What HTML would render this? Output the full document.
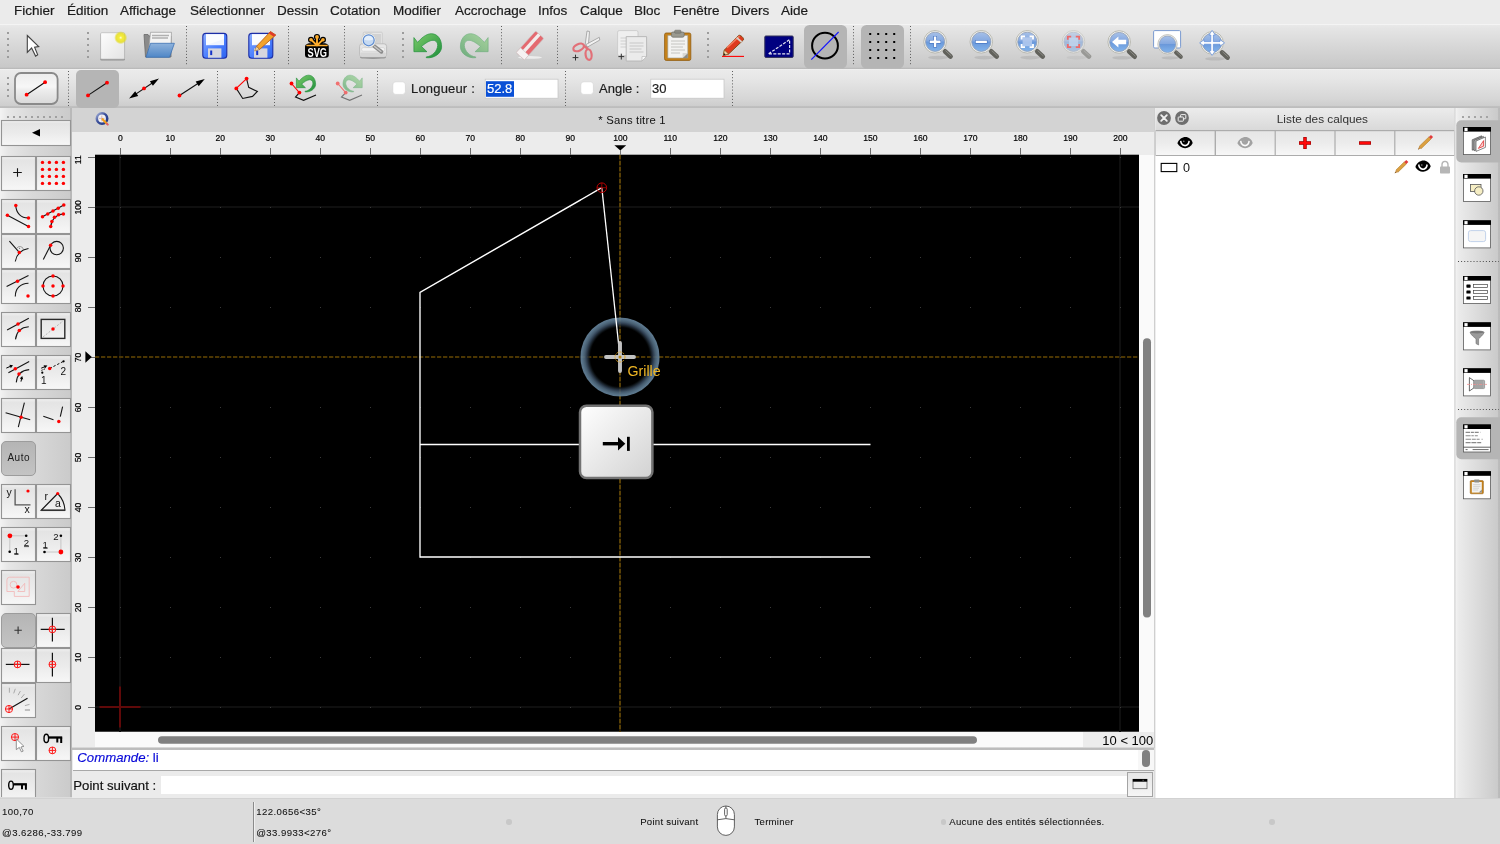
<!DOCTYPE html>
<html lang="fr">
<head>
<meta charset="utf-8">
<title>QCAD</title>
<style>
*{box-sizing:border-box;margin:0;padding:0}
html,body{width:1500px;height:844px;overflow:hidden;background:#dcdcdc;font-family:"Liberation Sans",sans-serif;color:#1a1a1a}
.abs{position:absolute}
#root{position:absolute;left:0;top:0;width:1500px;height:844px;will-change:transform}
#menubar{position:absolute;left:0;top:0;width:1500px;height:24px;background:#ebebeb}
#menubar span{position:absolute;top:3px;-webkit-text-stroke:.22px #1c1c1c;font-size:13.5px;line-height:16px;color:#1c1c1c;white-space:nowrap}
#tb1{position:absolute;left:0;top:24px;width:1500px;height:45px;background:linear-gradient(#e9e9e9 0px,#e5e5e5 3px,#d5d5d5 24px,#c8c8c8 42px,#bcbcbc 43.4px,#adadad 44.4px,#b4b4b4 45px);border-top:1px solid #f4f4f4}
#tb2{position:absolute;left:0;top:69px;width:1500px;height:39px;background:linear-gradient(#f3f3f3 0px,#ebebeb 1.2px,#e6e6e6 10px,#d6d6d6 30px,#cecece 36.6px,#bebebe 37.6px,#bcbcbc 39px)}
#lefttb{position:absolute;left:0;top:108px;width:72px;height:689px;background:linear-gradient(90deg,#f3f3f3 0px,#e7e7e7 8px,#d9d9d9 32px,#cbcbcb 69.6px,#b9b9b9 70.2px,#b9b9b9 72px)}
#cmdarea{position:absolute;left:72px;top:748px;width:1082px;height:50px;background:#ebebeb}
#status{position:absolute;left:0;top:798px;width:1500px;height:46px;background:#dcdcdc}
.t13{-webkit-text-stroke:.18px currentColor;font-size:13px;line-height:16px;white-space:nowrap;color:#1c1c1c}
.st{-webkit-text-stroke:.07px currentColor;font-size:9.6px;line-height:12px;letter-spacing:.42px;color:#111;white-space:nowrap}
.dot{width:5.4px;height:5.4px;border-radius:50%;background:#c8c8c8}
</style>
</head>
<body>
<div id="root">
<div id="menubar">
<span style="left:14px">Fichier</span><span style="left:67px">Édition</span><span style="left:120px">Affichage</span><span style="left:190px">Sélectionner</span><span style="left:277px">Dessin</span><span style="left:330px">Cotation</span><span style="left:393px">Modifier</span><span style="left:455px">Accrochage</span><span style="left:538px">Infos</span><span style="left:580px">Calque</span><span style="left:634px">Bloc</span><span style="left:673px">Fenêtre</span><span style="left:731px">Divers</span><span style="left:781px">Aide</span>
</div>
<div id="tb1"></div>
<svg class="abs" style="left:0;top:24px" width="1500" height="45" viewBox="0 24 1500 45">
<defs>
<radialGradient id="glow"><stop offset="0" stop-color="#fffde0"/><stop offset="0.25" stop-color="#f6ee3c"/><stop offset="0.7" stop-color="#e6de20" stop-opacity=".85"/><stop offset="1" stop-color="#e0d820" stop-opacity="0"/></radialGradient>
<linearGradient id="paper" x1="0" y1="0" x2="1" y2="1"><stop offset="0" stop-color="#fdfdfd"/><stop offset="1" stop-color="#e4e4e4"/></linearGradient>
<linearGradient id="folder" x1="0" y1="0" x2="0" y2="1"><stop offset="0" stop-color="#8fb3dc"/><stop offset="1" stop-color="#4f86c6"/></linearGradient>
<linearGradient id="disk" x1="0" y1="0" x2="1" y2="1"><stop offset="0" stop-color="#8fb0ff"/><stop offset="0.5" stop-color="#4f82ff"/><stop offset="1" stop-color="#2d63f0"/></linearGradient>
<linearGradient id="lens" x1="0" y1="0" x2="0" y2="1"><stop offset="0" stop-color="#a6c0e8"/><stop offset="0.47" stop-color="#84a8e0"/><stop offset="0.5" stop-color="#6a98da"/><stop offset="1" stop-color="#82b4ec"/></linearGradient>
<linearGradient id="green" x1="0" y1="0" x2="1" y2="1"><stop offset="0" stop-color="#7ccb6a"/><stop offset="1" stop-color="#1f8f3c"/></linearGradient>
<g id="mag">
<ellipse cx="3" cy="15.8" rx="10" ry="1.8" fill="#000" opacity=".09"/>
<path d="M10 9.6 L15.4 14.6" stroke="#62625c" stroke-width="4.8" stroke-linecap="round"/>
<path d="M10.6 9 L16 14" stroke="#8a8a84" stroke-width="1" stroke-linecap="round"/>
<circle cx="0" cy="0" r="11.3" fill="#f1f1ed" stroke="#b4b4ac" stroke-width=".9"/>
<circle cx="0" cy="0" r="9.6" fill="url(#lens)" stroke="#8e9cb4" stroke-width=".8"/>
</g>
</defs>
<!-- grips -->
<g fill="#9c9c9c">
<g id="grip5"><rect x="7" y="32" width="2" height="2"/><rect x="7" y="38" width="2" height="2"/><rect x="7" y="44" width="2" height="2"/><rect x="7" y="50" width="2" height="2"/><rect x="7" y="56" width="2" height="2"/></g>
<use href="#grip5" x="80"/><use href="#grip5" x="395"/><use href="#grip5" x="700"/>
</g>
<!-- dotted separators -->
<g stroke="#5c5c5c" stroke-width="1" stroke-dasharray="1 2.1">
<path d="M186.5 26V66M288.5 26V66M344.5 26V66M501.5 26V66M557.5 26V66M853.5 26V66M910.5 26V66"/>
</g>
<!-- cursor -->
<path d="M27.3 35.5 L38.7 46.6 L34.6 47.1 L37.7 54.7 L35.6 56.1 L31.6 48 L27.3 52.3 Z" fill="#fff" stroke="#444" stroke-width="1.1" stroke-linejoin="miter"/>
<!-- new -->
<rect x="100.2" y="33.4" width="24.8" height="27.2" rx="1.6" fill="#7e7e7e" opacity=".75"/>
<rect x="100.6" y="32.7" width="24" height="26.4" rx="1.2" fill="url(#paper)" stroke="#b8b8b8" stroke-width=".7"/>
<circle cx="120.7" cy="37.7" r="6.6" fill="url(#glow)"/>
<!-- open -->
<path d="M144 34.5 L148 34.5 L149 36 L171 36 L171 57 L145.5 57 Z" fill="#8a8a8a" stroke="#6a6a6a" stroke-width=".8"/>
<path d="M150.5 32.3 L171.5 32.3 L171 45 L148.5 52 Z" fill="#f4f4f4" stroke="#9a9a9a" stroke-width=".7"/>
<path d="M152 35.5H169M152 38H168" stroke="#b0b0b0" stroke-width="1.6"/>
<path d="M150.5 43.3 L174.4 43.3 L169.5 57.3 L146 57.3 Z" fill="url(#folder)" stroke="#3d72b4" stroke-width=".8"/>
<!-- save -->
<g id="floppy">
<rect x="202.8" y="33.4" width="24" height="24.8" rx="3" fill="url(#disk)" stroke="#1c2ea6" stroke-width="1.1"/>
<rect x="206" y="34.2" width="18" height="11" fill="#eef3ff"/>
<path d="M206 34.2H224V39L206 45.2Z" fill="#fff" opacity=".7"/>
<rect x="208" y="48.4" width="13.4" height="9.3" fill="#d6d6de"/>
<rect x="210.2" y="50.5" width="2" height="4.6" fill="#1734c8"/>
</g>
<!-- save as -->
<use href="#floppy" x="46"/>
<path d="M270.5 31.5 L275.8 35 L259.5 49.5 L256.5 46.3 Z" fill="#f2a32c" stroke="#b4570c" stroke-width=".8"/>
<path d="M270.5 31.5 L275.8 35 L273.8 36.8 L268.6 33.2 Z" fill="#e03a2a"/>
<path d="M256.5 46.3 L259.5 49.5 L254.6 51 Z" fill="#f0d4a6" stroke="#8a5a20" stroke-width=".5"/>
<!-- svg -->
<rect x="305" y="44" width="23.8" height="13.8" rx="3" fill="#000"/>
<g fill="none" stroke="#000" stroke-width="4.4" stroke-linecap="round" stroke-linejoin="round">
<path d="M317 45V37M317 45.4L311.2 39.8M317 45.4L322.8 39.8M309 45.4H325"/>
</g>
<circle cx="317" cy="37" r="3.1" fill="#000"/><circle cx="311" cy="39.7" r="3" fill="#000"/><circle cx="323" cy="39.7" r="3" fill="#000"/>
<g fill="none" stroke="#fbab2c" stroke-width="1.9" stroke-linecap="round">
<path d="M317 45V37M317 45.4L311.2 39.8M317 45.4L322.8 39.8"/>
</g>
<circle cx="317" cy="37" r="1.9" fill="#fbab2c"/><circle cx="311" cy="39.7" r="1.8" fill="#fbab2c"/><circle cx="323" cy="39.7" r="1.8" fill="#fbab2c"/>
<path d="M313.6 45.4 L317 42.4 L320.4 45.4Z" fill="#fbab2c"/>
<path d="M307 45.5 H327" stroke="#fbab2c" stroke-width="1.5" stroke-linecap="round"/>
<text transform="translate(307.5 56.8) scale(.7 1)" font-family="Liberation Sans" font-weight="bold" font-size="13.2" fill="#fff">SVG</text>
<!-- print preview -->
<rect x="363.3" y="32.2" width="19" height="14" rx="1" fill="#e6e6e6" stroke="#c4c4c4" stroke-width=".7"/>
<rect x="372" y="34" width="9" height="9.4" fill="#d2d2d2"/>
<ellipse cx="373" cy="57.4" rx="13" ry="1.7" fill="#000" opacity=".28"/>
<rect x="359.6" y="43.8" width="27" height="13.2" rx="2.6" fill="#e6e6e6" stroke="#b4b4b4" stroke-width=".8"/>
<rect x="361.6" y="47.6" width="23" height="3.6" rx="1.6" fill="#f4f4f4" stroke="#c4c4c4" stroke-width=".5"/>
<rect x="360.4" y="52.4" width="25.4" height="4" rx="1.2" fill="#d6d6d6"/>
<path d="M374 46 L381.4 51.8" stroke="#8c8c8c" stroke-width="3.8" stroke-linecap="round"/>
<path d="M374.6 46.4 L381 51.4" stroke="#c8c8c8" stroke-width="1.3" stroke-linecap="round"/>
<circle cx="368.7" cy="40.3" r="7.2" fill="#f6f6f4" stroke="#c4c4c0" stroke-width=".7"/>
<circle cx="368.7" cy="40.3" r="5.5" fill="#c6daf2" stroke="#5b8ad0" stroke-width="1.2"/>
<path d="M364 39.5 A4.8 4.8 0 0 1 373.4 39.5 Q368.7 41.5 364 39.5Z" fill="#eef5ff" opacity=".75"/>
<!-- undo -->
<path d="M413.9 37.6 L417.6 42.4 C421 38.5 426 33.7 431.4 33.7 C438 33.7 441.8 40 441.6 47.2 C441.3 53.5 434 58.6 426.3 57.7 L426.3 56.9 C432 56.5 437.5 51 437.7 45.4 C437.8 42 435.5 40.3 433 40.3 C429.5 40.3 425 43.5 421.5 46.5 L426.9 51.7 L413.9 51.7 Z" fill="url(#green)" stroke="#23903c" stroke-width=".7"/>
<!-- redo -->
<g opacity=".55"><path d="M413.9 37.6 L417.6 42.4 C421 38.5 426 33.7 431.4 33.7 C438 33.7 441.8 40 441.6 47.2 C441.3 53.5 434 58.6 426.3 57.7 L426.3 56.9 C432 56.5 437.5 51 437.7 45.4 C437.8 42 435.5 40.3 433 40.3 C429.5 40.3 425 43.5 421.5 46.5 L426.9 51.7 L413.9 51.7 Z" fill="url(#green)" stroke="#23903c" stroke-width=".7" transform="translate(902 0) scale(-1 1)"/></g>
<!-- eraser -->
<ellipse cx="530" cy="57.4" rx="12" ry="1.4" fill="#fff" opacity=".6"/>
<g transform="rotate(-48 530 45.5)">
<rect x="515.5" y="40" width="29" height="11" rx="1.2" fill="#e46a70" stroke="#c8c0c0" stroke-width=".6"/>
<rect x="515.5" y="43.2" width="29" height="3.4" fill="#f2ecec"/>
<rect x="515.5" y="40" width="6.4" height="11" fill="#f6f2f2" stroke="#c8c0c0" stroke-width=".5"/>
</g>
<!-- scissors -->
<path d="M587 31 L589.5 31.5 L588.2 47 L585 46 Z" fill="#f2f2f2" stroke="#9a9a9a" stroke-width=".8"/>
<path d="M599.3 37.3 L599.8 40 L587.5 47 L586 44.5 Z" fill="#f2f2f2" stroke="#9a9a9a" stroke-width=".8"/>
<ellipse cx="578.6" cy="47.4" rx="5.6" ry="3.3" transform="rotate(-24 578.6 47.4)" fill="none" stroke="#e27078" stroke-width="2.2"/>
<ellipse cx="588.6" cy="54.6" rx="3" ry="5.4" transform="rotate(-8 588.6 54.6)" fill="none" stroke="#e27078" stroke-width="2.2"/>
<path d="M583.5 45.5 L588 49" stroke="#e27078" stroke-width="2.4"/>
<path d="M572.6 57.6H578.4M575.5 54.7V60.5" stroke="#333" stroke-width="1"/>
<!-- copy -->
<rect x="617.6" y="30.6" width="20.4" height="25" rx="1.6" fill="#efefef" stroke="#c6c6c6" stroke-width=".8"/>
<path d="M620.5 38H629M620.5 41H629M620.5 44H629M620.5 47H629" stroke="#cfcfcf" stroke-width="1"/>
<path d="M626.2 36.6 H646.6 V56.5 L642 61 H626.2 Z" fill="#ebebeb" stroke="#b4b4b4" stroke-width=".9"/>
<path d="M646.6 56.5 L642 61 V56.5 Z" fill="#fafafa" stroke="#b0b0b0" stroke-width=".6"/>
<path d="M629.5 43H643.5M629.5 46H643.5M629.5 49H641.5M629.5 52H643.5" stroke="#c8c8c8" stroke-width="1.1"/>
<path d="M618.4 56.6H624.2M621.3 53.7V59.5" stroke="#333" stroke-width="1"/>
<!-- paste -->
<rect x="664.6" y="33" width="26.2" height="27.4" rx="1.6" fill="#c6821a" stroke="#8f5a0e" stroke-width=".8"/>
<path d="M667.8 35.4 H687.8 V58 H667.8 Z" fill="#f3f3f1" stroke="#9a9a90" stroke-width=".6"/>
<path d="M687.8 53 V58 H682.6 Z" fill="#8c8c86"/>
<path d="M682.6 53 H687.8 L682.6 58 Z" fill="#d8d8d4"/>
<path d="M671 41H685M671 44H685M671 47H683M671 50H685M671 53H680" stroke="#c4c4c0" stroke-width="1"/>
<rect x="671.4" y="32" width="12.8" height="5.2" rx="1.6" fill="#9a9a90" stroke="#6e6e66" stroke-width=".7"/>
<rect x="674.6" y="30.2" width="6.4" height="3" rx="1" fill="#8a8a82" stroke="#6e6e66" stroke-width=".6"/>
<!-- pencil -->
<path d="M722 56.4H744" stroke="#ff0000" stroke-width="1.1"/>
<path d="M738.6 35.4 C740 34.4 744.5 38 743.4 40 L728.6 54 L723.4 55.4 L724.4 50 Z" fill="#de3a1e" stroke="#7a4a12" stroke-width=".9"/>
<path d="M727 47.6 L739.5 36.2" stroke="#f47a5c" stroke-width="1.6"/>
<path d="M736.6 37.6 L741.6 42" stroke="#d8d0c8" stroke-width="1.8"/>
<path d="M724.4 50 L728.6 54 L723.4 55.4 Z" fill="#f0d4a6" stroke="#7a4a12" stroke-width=".6"/>
<path d="M723.4 55.4 L724 53 L725.6 54.8 Z" fill="#222"/>
<!-- navy box -->
<rect x="764.8" y="36" width="28.4" height="21.4" rx="1" fill="#000080" stroke="#33335a" stroke-width="1"/>
<path d="M768.6 53.8 L789.6 39.6 V53.8 Z" fill="none" stroke="#e6e6f2" stroke-width="1.2" stroke-dasharray="3 1.4"/>
<!-- selected: circle -->
<rect x="804" y="25" width="43" height="43.6" rx="5.5" fill="#b5b5b5"/>
<circle cx="825" cy="45.7" r="12.9" fill="none" stroke="#000" stroke-width="2"/>
<path d="M811.3 59.7 L838.6 32" stroke="#1414ff" stroke-width="1.1"/>
<!-- selected: grid -->
<rect x="861" y="25" width="43" height="43.6" rx="5.5" fill="#b5b5b5"/>
<g fill="#000" id="gdots">
<rect x="869.2" y="33" width="2" height="2"/><rect x="877.2" y="33" width="2" height="2"/><rect x="885.2" y="33" width="2" height="2"/><rect x="893.2" y="33" width="2" height="2"/>
<rect x="869.2" y="41" width="2" height="2"/><rect x="877.2" y="41" width="2" height="2"/><rect x="885.2" y="41" width="2" height="2"/><rect x="893.2" y="41" width="2" height="2"/>
<rect x="869.2" y="49" width="2" height="2"/><rect x="877.2" y="49" width="2" height="2"/><rect x="885.2" y="49" width="2" height="2"/><rect x="893.2" y="49" width="2" height="2"/>
<rect x="869.2" y="57" width="2" height="2"/><rect x="877.2" y="57" width="2" height="2"/><rect x="885.2" y="57" width="2" height="2"/><rect x="893.2" y="57" width="2" height="2"/>
</g>
<!-- zoom in -->
<use href="#mag" x="935.1" y="41.8"/>
<path d="M929.2 41.8H941M935.1 36V47.6" stroke="#3f6fbe" stroke-width="3.6"/><path d="M929.7 41.8H940.5M935.1 36.5V47.1" stroke="#fff" stroke-width="2.4"/>
<!-- zoom out -->
<use href="#mag" x="981.3" y="41.8"/>
<path d="M975.2 41.8H987.4" stroke="#3f6fbe" stroke-width="3.6"/><path d="M975.7 41.8H986.9" stroke="#fff" stroke-width="2.4"/>
<!-- zoom fit -->
<use href="#mag" x="1027.3" y="41.8"/>
<rect x="1022.6" y="37.4" width="9.4" height="8.8" fill="#b8cdf0" opacity=".8"/>
<path d="M1021.6 39.6V36.4H1025M1029.6 36.4H1033V39.6M1033 44V47.2H1029.6M1025 47.2H1021.6V44" fill="none" stroke="#fff" stroke-width="1.8"/>
<!-- zoom sel (faded) -->
<g opacity=".5"><use href="#mag" x="1073.5" y="41.8"/></g>
<rect x="1069" y="37.6" width="9" height="8.4" fill="#c2d4ee" opacity=".8"/>
<path d="M1067.8 39.8V36.6H1071.2M1075.8 36.6H1079.2V39.8M1079.2 44V47.2H1075.8M1071.2 47.2H1067.8V44" fill="none" stroke="#ee6a6a" stroke-width="1.8"/>
<!-- zoom prev -->
<use href="#mag" x="1119.2" y="42"/>
<path d="M1112 42 L1118.4 36.6 V39.8 H1126.2 V44.2 H1118.4 V47.4 Z" fill="#fff"/>
<!-- zoom window -->
<rect x="1153.6" y="30.6" width="27" height="17.4" rx="1.2" fill="#fff" stroke="#7a9ad0" stroke-width="1"/>
<g transform="translate(1167.5 44.3) scale(.86)"><use href="#mag"/></g>
<!-- pan -->
<use href="#mag" x="1212.1" y="42.9"/>
<path d="M1212.1 30.4 L1215.3 35 H1213.4 V41.6 H1220 V39.7 L1224.6 42.9 L1220 46.1 V44.2 H1213.4 V50.8 H1215.3 L1212.1 55.4 L1208.9 50.8 H1210.8 V44.2 H1204.2 V46.1 L1199.6 42.9 L1204.2 39.7 V41.6 H1210.8 V35 H1208.9 Z" fill="#fff" stroke="#5a8ad8" stroke-width=".7"/>
</svg>
<div id="tb2"></div>
<svg class="abs" style="left:0;top:69px" width="800" height="39" viewBox="0 69 800 39">
<defs>
<linearGradient id="btng" x1="0" y1="0" x2="0" y2="1"><stop offset="0" stop-color="#ececec"/><stop offset=".45" stop-color="#f7f7f7"/><stop offset=".55" stop-color="#ededed"/><stop offset="1" stop-color="#d9d9d9"/></linearGradient>
</defs>
<g fill="#9c9c9c"><rect x="7" y="77" width="2" height="2"/><rect x="7" y="83" width="2" height="2"/><rect x="7" y="89" width="2" height="2"/><rect x="7" y="95" width="2" height="2"/></g>
<g stroke="#5c5c5c" stroke-width="1" stroke-dasharray="1 2.1"><path d="M68.5 71V106M217.5 71V106M274.5 71V106M377.5 71V106M565.5 71V106M732.5 71V106"/></g>
<rect x="15" y="73" width="42.6" height="31" rx="6" fill="url(#btng)" stroke="#8a8a8a" stroke-width="1.8"/>
<path d="M26.6 94.7L45.1 82.2" stroke="#111" stroke-width="1.1"/>
<circle cx="26.6" cy="94.7" r="1.9" fill="#ff0000"/><circle cx="45.1" cy="82.2" r="1.9" fill="#ff0000"/>
<rect x="76" y="70" width="43" height="38" rx="5" fill="#b5b5b5"/>
<path d="M88 95.4L107 82.7" stroke="#111" stroke-width="1.1"/>
<circle cx="88" cy="95.4" r="1.9" fill="#ff0000"/><circle cx="107" cy="82.7" r="1.9" fill="#ff0000"/>
<!-- double arrow -->
<path d="M132 96.6L156 80.5" stroke="#111" stroke-width="1.1"/>
<path d="M129.1 98.5 L135.2 91.3 L138.2 95.9 Z M159 78.6 L152.9 85.8 L149.9 81.2 Z" fill="#000"/>
<circle cx="144" cy="88.4" r="1.9" fill="#ff0000"/>
<!-- single arrow -->
<path d="M179.5 95.5L201 81.5" stroke="#111" stroke-width="1.1"/>
<path d="M204.8 79 L198.7 86.2 L195.7 81.6 Z" fill="#000"/>
<circle cx="179.5" cy="95.5" r="1.9" fill="#ff0000"/>
<!-- polygon -->
<path d="M246.6 78.6 L248.7 87.3 L257.4 91.5 L252.5 96.4 L242.7 98.5 L236.3 88.4" fill="none" stroke="#111" stroke-width="1.1"/>
<path d="M246.6 78.6 L236.3 88.4" stroke="#ff0000" stroke-width="1.1"/>
<circle cx="246.6" cy="78.6" r="1.9" fill="#ff0000"/><circle cx="236.3" cy="88.4" r="1.9" fill="#ff0000"/>
<!-- undo line -->
<g id="ul">
<path d="M299.4 92.6 L295.5 97.1 L303.6 100.3 L316 95.1" fill="none" stroke="#111" stroke-width="1.1"/>
<path d="M291.5 83.5 L299.4 92.6" stroke="#ff0000" stroke-width="1.1"/>
<circle cx="291.5" cy="83.5" r="1.9" fill="#ff0000"/><circle cx="299.4" cy="92.6" r="1.9" fill="#ff0000"/>
</g>
<g transform="translate(296.4 75.2) scale(.693) translate(-413.9 -33.7)"><path d="M413.9 37.6 L417.6 42.4 C421 38.5 426 33.7 431.4 33.7 C438 33.7 441.8 40 441.6 47.2 C441.3 53.5 434 58.6 426.3 57.7 L426.3 56.9 C432 56.5 437.5 51 437.7 45.4 C437.8 42 435.5 40.3 433 40.3 C429.5 40.3 425 43.5 421.5 46.5 L426.9 51.7 L413.9 51.7 Z" fill="url(#green)" stroke="#23903c" stroke-width=".9"/></g>
<!-- redo line -->
<g opacity=".5">
<path d="M345.7 92.6 L341.5 97.1 L349.7 100.3 L362 95.1" fill="none" stroke="#111" stroke-width="1.1"/>
<path d="M337.7 83.5 L345.7 92.6" stroke="#ff0000" stroke-width="1.1"/>
<circle cx="337.7" cy="83.5" r="1.9" fill="#ff0000"/><circle cx="345.7" cy="92.6" r="1.9" fill="#ff0000"/>
<g transform="translate(362.2 75.2) scale(-.693 .693) translate(-413.9 -33.7)"><path d="M413.9 37.6 L417.6 42.4 C421 38.5 426 33.7 431.4 33.7 C438 33.7 441.8 40 441.6 47.2 C441.3 53.5 434 58.6 426.3 57.7 L426.3 56.9 C432 56.5 437.5 51 437.7 45.4 C437.8 42 435.5 40.3 433 40.3 C429.5 40.3 425 43.5 421.5 46.5 L426.9 51.7 L413.9 51.7 Z" fill="url(#green)" stroke="#23903c" stroke-width=".9"/></g>
</g>
<!-- checkboxes -->
<rect x="392.8" y="81.8" width="12.6" height="12.6" rx="3" fill="#fff" stroke="#d0d0d0" stroke-width=".6"/>
<rect x="580.8" y="81.8" width="12.6" height="12.6" rx="3" fill="#fff" stroke="#d0d0d0" stroke-width=".6"/>
<!-- inputs -->
<rect x="485.2" y="79.2" width="72.8" height="19" fill="#fff" stroke="#c4c4c4" stroke-width=".7"/>
<rect x="486" y="81.2" width="28" height="15.6" fill="#0a50d6"/>
<rect x="650.8" y="79.2" width="73.2" height="19" fill="#fff" stroke="#c4c4c4" stroke-width=".7"/>
</svg>
<div class="abs t13" style="left:411px;top:81px;letter-spacing:.18px">Longueur :</div>
<div class="abs t13" style="left:487px;top:81px;color:#fff">52.8</div>
<div class="abs t13" style="left:599px;top:81px">Angle :</div>
<div class="abs t13" style="left:652px;top:81px">30</div>
<div id="lefttb"></div>
<svg class="abs" style="left:0;top:108px" width="72" height="689" viewBox="0 108 72 689"><defs>
<linearGradient id="lbg" x1="0" y1="0" x2="0" y2="1"><stop offset="0" stop-color="#f0f0f0"/><stop offset=".12" stop-color="#e4e4e4"/><stop offset=".5" stop-color="#ebebeb"/><stop offset="1" stop-color="#f7f7f7"/></linearGradient>
<linearGradient id="lbsel" x1="0" y1="0" x2="0" y2="1"><stop offset="0" stop-color="#b4b4b4"/><stop offset="1" stop-color="#c4c4c4"/></linearGradient>
</defs><g fill="#a0a0a0"><rect x="7" y="116" width="2" height="2"/><rect x="13" y="116" width="2" height="2"/><rect x="19" y="116" width="2" height="2"/><rect x="25" y="116" width="2" height="2"/><rect x="31" y="116" width="2" height="2"/><rect x="37" y="116" width="2" height="2"/><rect x="43" y="116" width="2" height="2"/><rect x="49" y="116" width="2" height="2"/><rect x="55" y="116" width="2" height="2"/><rect x="61" y="116" width="2" height="2"/></g><rect x="1.5" y="120.5" width="69" height="25" fill="url(#lbg)" stroke="#949494" stroke-width="1.1"/><path d="M32 132.7 L40 129 V136.4 Z" fill="#000"/><rect x="1.5" y="156.5" width="34" height="34" fill="url(#lbg)" stroke="#949494" stroke-width="1.1"/><rect x="36.5" y="156.5" width="34" height="34" fill="url(#lbg)" stroke="#949494" stroke-width="1.1"/><rect x="1.5" y="199.5" width="34" height="34" fill="url(#lbg)" stroke="#949494" stroke-width="1.1"/><rect x="36.5" y="199.5" width="34" height="34" fill="url(#lbg)" stroke="#949494" stroke-width="1.1"/><rect x="1.5" y="234.5" width="34" height="34" fill="url(#lbg)" stroke="#949494" stroke-width="1.1"/><rect x="36.5" y="234.5" width="34" height="34" fill="url(#lbg)" stroke="#949494" stroke-width="1.1"/><rect x="1.5" y="269.5" width="34" height="34" fill="url(#lbg)" stroke="#949494" stroke-width="1.1"/><rect x="36.5" y="269.5" width="34" height="34" fill="url(#lbg)" stroke="#949494" stroke-width="1.1"/><rect x="1.5" y="312.5" width="34" height="34" fill="url(#lbg)" stroke="#949494" stroke-width="1.1"/><rect x="36.5" y="312.5" width="34" height="34" fill="url(#lbg)" stroke="#949494" stroke-width="1.1"/><rect x="1.5" y="355.5" width="34" height="34" fill="url(#lbg)" stroke="#949494" stroke-width="1.1"/><rect x="36.5" y="355.5" width="34" height="34" fill="url(#lbg)" stroke="#949494" stroke-width="1.1"/><rect x="1.5" y="398.5" width="34" height="34" fill="url(#lbg)" stroke="#949494" stroke-width="1.1"/><rect x="36.5" y="398.5" width="34" height="34" fill="url(#lbg)" stroke="#949494" stroke-width="1.1"/><rect x="1.5" y="484.5" width="34" height="34" fill="url(#lbg)" stroke="#949494" stroke-width="1.1"/><rect x="36.5" y="484.5" width="34" height="34" fill="url(#lbg)" stroke="#949494" stroke-width="1.1"/><rect x="1.5" y="527.5" width="34" height="34" fill="url(#lbg)" stroke="#949494" stroke-width="1.1"/><rect x="36.5" y="527.5" width="34" height="34" fill="url(#lbg)" stroke="#949494" stroke-width="1.1"/><rect x="1.5" y="570.5" width="34" height="34" fill="url(#lbg)" stroke="#949494" stroke-width="1.1"/><rect x="1.5" y="648.5" width="34" height="34" fill="url(#lbg)" stroke="#949494" stroke-width="1.1"/><rect x="36.5" y="648.5" width="34" height="34" fill="url(#lbg)" stroke="#949494" stroke-width="1.1"/><rect x="1.5" y="683.5" width="34" height="34" fill="url(#lbg)" stroke="#949494" stroke-width="1.1"/><rect x="1.5" y="726.5" width="34" height="34" fill="url(#lbg)" stroke="#949494" stroke-width="1.1"/><rect x="36.5" y="726.5" width="34" height="34" fill="url(#lbg)" stroke="#949494" stroke-width="1.1"/><rect x="1.5" y="769.5" width="34" height="34" fill="url(#lbg)" stroke="#949494" stroke-width="1.1"/><rect x="1.5" y="441.5" width="34" height="34" rx="4.5" fill="url(#lbsel)" stroke="#9c9c9c" stroke-width="1"/><rect x="1.5" y="613.5" width="34" height="34" rx="4.5" fill="url(#lbsel)" stroke="#9c9c9c" stroke-width="1"/><rect x="36.5" y="613.5" width="34" height="34" fill="url(#lbg)" stroke="#949494" stroke-width="1.1"/><path d="M13.2 172.5H21.8M17.5 168.2V176.8" stroke="#151515" stroke-width="1.1" fill="none"/><circle cx="42.5" cy="162.4" r="1.7" fill="#ff0000"/><circle cx="49.4" cy="162.4" r="1.7" fill="#ff0000"/><circle cx="56.4" cy="162.4" r="1.7" fill="#ff0000"/><circle cx="63.4" cy="162.4" r="1.7" fill="#ff0000"/><circle cx="42.5" cy="169.4" r="1.7" fill="#ff0000"/><circle cx="49.4" cy="169.4" r="1.7" fill="#ff0000"/><circle cx="56.4" cy="169.4" r="1.7" fill="#ff0000"/><circle cx="63.4" cy="169.4" r="1.7" fill="#ff0000"/><circle cx="42.5" cy="176.4" r="1.7" fill="#ff0000"/><circle cx="49.4" cy="176.4" r="1.7" fill="#ff0000"/><circle cx="56.4" cy="176.4" r="1.7" fill="#ff0000"/><circle cx="63.4" cy="176.4" r="1.7" fill="#ff0000"/><circle cx="42.5" cy="183.4" r="1.7" fill="#ff0000"/><circle cx="49.4" cy="183.4" r="1.7" fill="#ff0000"/><circle cx="56.4" cy="183.4" r="1.7" fill="#ff0000"/><circle cx="63.4" cy="183.4" r="1.7" fill="#ff0000"/><path d="M15.8 205.5 C16 213 21 218 28.5 217.9 M7.4 215.2 L28.5 226.4" stroke="#151515" stroke-width="1.1" fill="none"/><circle cx="15.8" cy="205.5" r="1.75" fill="#ff0000"/><circle cx="7.4" cy="215.2" r="1.75" fill="#ff0000"/><circle cx="28.5" cy="217.9" r="1.75" fill="#ff0000"/><circle cx="28.5" cy="226.4" r="1.75" fill="#ff0000"/><path d="M42.5 216.7 L63.8 205 M63.4 214 C56 214.5 52 218 50.7 226.4" stroke="#151515" stroke-width="1.1" fill="none"/><circle cx="42.5" cy="216.7" r="1.75" fill="#ff0000"/><circle cx="47.7" cy="214" r="1.75" fill="#ff0000"/><circle cx="53" cy="211.1" r="1.75" fill="#ff0000"/><circle cx="58.2" cy="208.2" r="1.75" fill="#ff0000"/><circle cx="63.8" cy="205" r="1.75" fill="#ff0000"/><circle cx="63.4" cy="214" r="1.75" fill="#ff0000"/><circle cx="58.6" cy="214.8" r="1.75" fill="#ff0000"/><circle cx="54.5" cy="217.2" r="1.75" fill="#ff0000"/><circle cx="51.9" cy="221.6" r="1.75" fill="#ff0000"/><circle cx="50.7" cy="226.4" r="1.75" fill="#ff0000"/><path d="M9.4 241.2 L19.3 252.4 M15.3 261.5 C16.5 254 21 249.8 28.5 248.5" stroke="#151515" stroke-width="1.1" fill="none"/><path d="M16.6 248.6 A3.6 3.6 0 0 1 23.4 249.4" fill="none" stroke="#666" stroke-width=".6"/><circle cx="19.6" cy="248.2" r=".5" fill="#444"/><circle cx="19.3" cy="252.4" r="1.75" fill="#ff0000"/><circle cx="56.7" cy="248.1" r="6.7" stroke="#151515" stroke-width="1.1" fill="none"/><path d="M43.3 259.5 L50.6 245.2" stroke="#151515" stroke-width="1.1" fill="none"/><circle cx="50.6" cy="245.2" r="1.75" fill="#ff0000"/><path d="M6.6 286.5 L28.5 275.6 M15.3 296.4 C15.3 288.5 20.5 283.5 28.5 283.2" stroke="#151515" stroke-width="1.1" fill="none"/><circle cx="17.5" cy="281.2" r="1.75" fill="#ff0000"/><circle cx="28" cy="296" r="1.75" fill="#ff0000"/><circle cx="53" cy="286" r="10" stroke="#151515" stroke-width="1.1" fill="none"/><circle cx="53" cy="286" r="1.75" fill="#ff0000"/><circle cx="53" cy="276" r="1.75" fill="#ff0000"/><circle cx="53" cy="296" r="1.75" fill="#ff0000"/><circle cx="43" cy="286" r="1.75" fill="#ff0000"/><circle cx="63" cy="286" r="1.75" fill="#ff0000"/><path d="M7.1 329.9 L28.8 318.2 M15.5 339.4 C16.5 331.5 21 327.2 28.8 326.7" stroke="#151515" stroke-width="1.1" fill="none"/><circle cx="18" cy="324.1" r="1.75" fill="#ff0000"/><circle cx="19.3" cy="330.4" r="1.75" fill="#ff0000"/><rect x="41.2" y="319.4" width="23.6" height="19" fill="none" stroke="#2a2a2a" stroke-width="1.4"/><path d="M43 337 L63 321" stroke="#999" stroke-width=".7" stroke-dasharray="2 1.6"/><circle cx="53" cy="328.9" r="1.75" fill="#ff0000"/><path d="M8.4 372.7 L29.2 361.5 M16.3 382.4 C17 375 21.5 370.2 29.2 369.6" stroke="#151515" stroke-width="1.1" fill="none"/><path d="M6.3 368.1 L10.5 366.3" stroke="#000" stroke-width="1"/><path d="M13 365.2 L9.4 364.8 L10.8 368.2 Z" fill="#000"/><path d="M21 381.6 L21.6 378.6" stroke="#000" stroke-width="1"/><path d="M22.2 376 L19.8 378.6 L23.2 379.4 Z" fill="#000"/><circle cx="15.3" cy="368.8" r="1.75" fill="#ff0000"/><circle cx="19" cy="373.9" r="1.75" fill="#ff0000"/><path d="M49.7 368.4 L63.6 361.3" stroke="#111" stroke-width="1" stroke-dasharray="2.4 1.8"/><path d="M41.2 368.2 L44.6 366.8" stroke="#000" stroke-width="1"/><path d="M47.4 365.6 L43.6 365.2 L45 368.6 Z" fill="#000"/><path d="M41.4 370.4 L45 368.9" stroke="#000" stroke-width=".9" stroke-dasharray="1.4 1"/><circle cx="63.6" cy="361.3" r="1.1" fill="#000"/><circle cx="42.3" cy="372.7" r="1.1" fill="#000"/><circle cx="49.7" cy="368.4" r="1.75" fill="#ff0000"/><text x="41" y="384.4" font-size="10" font-family="Liberation Sans" fill="#111">1</text><text x="60.6" y="374.6" font-size="10" font-family="Liberation Sans" fill="#111">2</text><path d="M5.6 412.7 L30.2 419.7 M24.4 402.7 L18.3 427.1" stroke="#151515" stroke-width="1.1" fill="none"/><circle cx="21.1" cy="417.2" r="1.75" fill="#ff0000"/><path d="M43.3 416.2 L53.5 419.7 M62.6 406.6 L60.3 416.7" stroke="#151515" stroke-width="1.1" fill="none"/><circle cx="58.8" cy="421.5" r="1.75" fill="#ff0000"/><path d="M15.1 489.2 V504.8 H30.5" fill="none" stroke="#555" stroke-width="1.3"/><circle cx="28" cy="491" r="1.6" fill="#ff0000"/><text x="6.6" y="496.4" font-size="10.5" font-family="Liberation Sans" fill="#111">y</text><text x="24.6" y="512.6" font-size="10.5" font-family="Liberation Sans" fill="#111">x</text><path d="M57.7 493.5 L41.2 510.3 H65 C64.6 503.5 62 498 57.7 493.5" fill="none" stroke="#151515" stroke-width="1.1"/><path d="M41.2 510.3H65" stroke="#333" stroke-width="1.5"/><circle cx="57.7" cy="493.5" r="1.6" fill="#ff0000"/><text x="44.6" y="499.9" font-size="10.5" font-family="Liberation Sans" fill="#111">r</text><text x="55" y="506.5" font-size="10.5" font-family="Liberation Sans" fill="#111">a</text><path d="M9.9 535.8 H26.2 M9.9 535.8 L9.7 551.8" stroke="#bdbdbd" stroke-width=".8" fill="none"/><circle cx="9.9" cy="535.8" r="2.4" fill="#ff0000"/><circle cx="26.2" cy="535.8" r="1.3" fill="#000"/><circle cx="9.7" cy="551.8" r="1.3" fill="#000"/><text x="23.8" y="546.2" font-size="9.6" font-family="Liberation Sans" fill="#111">2</text><text x="13.6" y="554.2" font-size="9.6" font-family="Liberation Sans" fill="#111">1</text><path d="M24 546.6H29M14.3 554.5H18.5" stroke="#111" stroke-width=".7"/><path d="M44.5 552 H60.9 V535.8" stroke="#bdbdbd" stroke-width=".8" fill="none"/><circle cx="60.9" cy="552" r="2.4" fill="#ff0000"/><circle cx="60.9" cy="535.8" r="1.3" fill="#000"/><circle cx="44.5" cy="552" r="1.3" fill="#000"/><text x="53.2" y="540.4" font-size="9.6" font-family="Liberation Sans" fill="#111">2</text><text x="42.6" y="548" font-size="9.6" font-family="Liberation Sans" fill="#111">1</text><path d="M43.3 548.4H47.6" stroke="#111" stroke-width=".7"/><path d="M9.7 577.2 H29.2 V596.4 H14.3 V591.5 H6.9 V580 Q6.9 577.2 9.7 577.2 Z" fill="none" stroke="#f3b4b4" stroke-width=".8"/><circle cx="13.5" cy="584.7" r="3.4" fill="none" stroke="#f3b4b4" stroke-width=".8"/><path d="M24.7 583.3 V591.5 H17.8 Z" fill="none" stroke="#f3b4b4" stroke-width=".8"/><circle cx="18" cy="587" r="1.8" fill="#ff0000"/><path d="M14.4 630.2H21.8M18.1 626.5V633.9" stroke="#333" stroke-width="1.1"/><path d="M52.4 617.8V641.4M40.7 629.4H64.7" stroke="#111" stroke-width="1.2"/><circle cx="52.4" cy="629.4" r="3.4" fill="none" stroke="#ff1a1a" stroke-width="1"/><path d="M49.0 629.4H55.8M52.4 626.0V632.8" stroke="#ff1a1a" stroke-width="1"/><path d="M5.8 664.4H29.5" stroke="#111" stroke-width="1.2"/><circle cx="17.5" cy="664.4" r="3.4" fill="none" stroke="#ff1a1a" stroke-width="1"/><path d="M14.1 664.4H20.9M17.5 661.0V667.8" stroke="#ff1a1a" stroke-width="1"/><path d="M52.4 652.7V676.4" stroke="#111" stroke-width="1.2"/><circle cx="52.4" cy="664.4" r="3.4" fill="none" stroke="#ff1a1a" stroke-width="1"/><path d="M49.0 664.4H55.8M52.4 661.0V667.8" stroke="#ff1a1a" stroke-width="1"/><path d="M9.4 687.8V692.7M15.3 688.8L13.7 693.4M20.4 691L18.1 695.2M24.4 694.1L21.2 698M29.5 704.4L24.9 705.6" stroke="#9a9a9a" stroke-width=".8"/><path d="M30 710H24.9" stroke="#aaa" stroke-width="1.4"/><path d="M9 709 L27.5 698.3" stroke="#111" stroke-width="1.2"/><circle cx="9" cy="709" r="3.6" fill="none" stroke="#ff1a1a" stroke-width="1"/><path d="M5.4 709H12.6M9 705.4V712.6" stroke="#ff1a1a" stroke-width="1"/><circle cx="15" cy="737.1" r="3.6" fill="none" stroke="#ff1a1a" stroke-width="1"/><path d="M11.4 737.1H18.6M15 733.5V740.7" stroke="#ff1a1a" stroke-width="1"/><path d="M16.3 738.9 L23.9 746.3 L20.9 747 L23.2 751.1 L21.4 751.8 L19.3 747.4 L16.3 749.6 Z" fill="#fff" stroke="#777" stroke-width=".8"/><g id="key"><ellipse cx="46.3" cy="738.4" rx="2.3" ry="4.1" fill="none" stroke="#000" stroke-width="1.4"/><path d="M48.6 737.5H62.2" stroke="#000" stroke-width="2.3"/><path d="M57.3 737.6V742.4M61.2 737.6V743" stroke="#000" stroke-width="2"/></g><circle cx="52.4" cy="750.4" r="3.4" fill="none" stroke="#ff1a1a" stroke-width="1"/><path d="M49.0 750.4H55.8M52.4 747.0V753.8" stroke="#ff1a1a" stroke-width="1"/><use href="#key" x="-35.3" y="46.8"/></svg><div class="abs" style="left:1px;top:451px;width:35px;text-align:center;font-size:10px;line-height:14px;letter-spacing:.5px;text-indent:.5px;color:#1a1a1a">Auto</div>
<svg class="abs" style="left:72px;top:108px" width="1083" height="640" viewBox="72 108 1083 640">
<defs>
<radialGradient id="ring" cx="620" cy="357" r="39.6" gradientUnits="userSpaceOnUse">
<stop offset="0.74" stop-color="#0c1116" stop-opacity="0"/><stop offset="0.79" stop-color="#1a242c" stop-opacity=".75"/><stop offset="0.84" stop-color="#34455a" stop-opacity=".85"/><stop offset="0.89" stop-color="#4e677c" stop-opacity=".88"/><stop offset="0.95" stop-color="#607e96" stop-opacity=".9"/><stop offset="0.985" stop-color="#68869e" stop-opacity=".9"/><stop offset="1" stop-color="#5c788e" stop-opacity=".85"/>
</radialGradient>
<linearGradient id="keyg" x1="0" y1="0" x2="1" y2="1"><stop offset="0" stop-color="#ffffff"/><stop offset=".45" stop-color="#ebebeb"/><stop offset="1" stop-color="#d2d2d2"/></linearGradient>
</defs>
<rect x="72" y="108" width="1083" height="24" fill="#d3d3d3"/>
<rect x="72" y="132" width="1083" height="23" fill="#ececec"/>
<rect x="72" y="155" width="23" height="593" fill="#ececec"/>
<rect x="95" y="154.7" width="1044" height="577" fill="#000"/>
<rect x="1139" y="155" width="15" height="577" fill="#fafafa"/>
<rect x="95" y="732" width="988" height="15" fill="#fafafa"/>
<rect x="1083" y="732" width="71" height="15" fill="#ececec"/>
<rect x="1154" y="108" width="1.5" height="690" fill="#cfcfcf"/>
<path d="M120 155V732M620 155V732M1120 155V732M95 707H1139M95 207H1139" stroke="#0f0f0f" stroke-width="2"/>
<path d="M120 707.5h1M120 657.5h1M120 607.5h1M120 557.5h1M120 507.5h1M120 457.5h1M120 407.5h1M120 357.5h1M120 307.5h1M120 257.5h1M120 207.5h1M120 157.5h1M170 707.5h1M170 657.5h1M170 607.5h1M170 557.5h1M170 507.5h1M170 457.5h1M170 407.5h1M170 357.5h1M170 307.5h1M170 257.5h1M170 207.5h1M170 157.5h1M220 707.5h1M220 657.5h1M220 607.5h1M220 557.5h1M220 507.5h1M220 457.5h1M220 407.5h1M220 357.5h1M220 307.5h1M220 257.5h1M220 207.5h1M220 157.5h1M270 707.5h1M270 657.5h1M270 607.5h1M270 557.5h1M270 507.5h1M270 457.5h1M270 407.5h1M270 357.5h1M270 307.5h1M270 257.5h1M270 207.5h1M270 157.5h1M320 707.5h1M320 657.5h1M320 607.5h1M320 557.5h1M320 507.5h1M320 457.5h1M320 407.5h1M320 357.5h1M320 307.5h1M320 257.5h1M320 207.5h1M320 157.5h1M370 707.5h1M370 657.5h1M370 607.5h1M370 557.5h1M370 507.5h1M370 457.5h1M370 407.5h1M370 357.5h1M370 307.5h1M370 257.5h1M370 207.5h1M370 157.5h1M420 707.5h1M420 657.5h1M420 607.5h1M420 557.5h1M420 507.5h1M420 457.5h1M420 407.5h1M420 357.5h1M420 307.5h1M420 257.5h1M420 207.5h1M420 157.5h1M470 707.5h1M470 657.5h1M470 607.5h1M470 557.5h1M470 507.5h1M470 457.5h1M470 407.5h1M470 357.5h1M470 307.5h1M470 257.5h1M470 207.5h1M470 157.5h1M520 707.5h1M520 657.5h1M520 607.5h1M520 557.5h1M520 507.5h1M520 457.5h1M520 407.5h1M520 357.5h1M520 307.5h1M520 257.5h1M520 207.5h1M520 157.5h1M570 707.5h1M570 657.5h1M570 607.5h1M570 557.5h1M570 507.5h1M570 457.5h1M570 407.5h1M570 357.5h1M570 307.5h1M570 257.5h1M570 207.5h1M570 157.5h1M620 707.5h1M620 657.5h1M620 607.5h1M620 557.5h1M620 507.5h1M620 457.5h1M620 407.5h1M620 357.5h1M620 307.5h1M620 257.5h1M620 207.5h1M620 157.5h1M670 707.5h1M670 657.5h1M670 607.5h1M670 557.5h1M670 507.5h1M670 457.5h1M670 407.5h1M670 357.5h1M670 307.5h1M670 257.5h1M670 207.5h1M670 157.5h1M720 707.5h1M720 657.5h1M720 607.5h1M720 557.5h1M720 507.5h1M720 457.5h1M720 407.5h1M720 357.5h1M720 307.5h1M720 257.5h1M720 207.5h1M720 157.5h1M770 707.5h1M770 657.5h1M770 607.5h1M770 557.5h1M770 507.5h1M770 457.5h1M770 407.5h1M770 357.5h1M770 307.5h1M770 257.5h1M770 207.5h1M770 157.5h1M820 707.5h1M820 657.5h1M820 607.5h1M820 557.5h1M820 507.5h1M820 457.5h1M820 407.5h1M820 357.5h1M820 307.5h1M820 257.5h1M820 207.5h1M820 157.5h1M870 707.5h1M870 657.5h1M870 607.5h1M870 557.5h1M870 507.5h1M870 457.5h1M870 407.5h1M870 357.5h1M870 307.5h1M870 257.5h1M870 207.5h1M870 157.5h1M920 707.5h1M920 657.5h1M920 607.5h1M920 557.5h1M920 507.5h1M920 457.5h1M920 407.5h1M920 357.5h1M920 307.5h1M920 257.5h1M920 207.5h1M920 157.5h1M970 707.5h1M970 657.5h1M970 607.5h1M970 557.5h1M970 507.5h1M970 457.5h1M970 407.5h1M970 357.5h1M970 307.5h1M970 257.5h1M970 207.5h1M970 157.5h1M1020 707.5h1M1020 657.5h1M1020 607.5h1M1020 557.5h1M1020 507.5h1M1020 457.5h1M1020 407.5h1M1020 357.5h1M1020 307.5h1M1020 257.5h1M1020 207.5h1M1020 157.5h1M1070 707.5h1M1070 657.5h1M1070 607.5h1M1070 557.5h1M1070 507.5h1M1070 457.5h1M1070 407.5h1M1070 357.5h1M1070 307.5h1M1070 257.5h1M1070 207.5h1M1070 157.5h1M1120 707.5h1M1120 657.5h1M1120 607.5h1M1120 557.5h1M1120 507.5h1M1120 457.5h1M1120 407.5h1M1120 357.5h1M1120 307.5h1M1120 257.5h1M1120 207.5h1M1120 157.5h1" stroke="#3a3a3a" stroke-width="1"/>
<path d="M120.5 148V155M170.5 148V155M220.5 148V155M270.5 148V155M320.5 148V155M370.5 148V155M420.5 148V155M470.5 148V155M520.5 148V155M570.5 148V155M620.5 148V155M670.5 148V155M720.5 148V155M770.5 148V155M820.5 148V155M870.5 148V155M920.5 148V155M970.5 148V155M1020.5 148V155M1070.5 148V155M1120.5 148V155" stroke="#6a6a6a" stroke-width="1"/>
<g font-family="Liberation Sans" font-size="8.6" fill="#000" stroke="#000" stroke-width=".18"><text x="120.3" y="140.7" text-anchor="middle">0</text><text x="170.3" y="140.7" text-anchor="middle">10</text><text x="220.3" y="140.7" text-anchor="middle">20</text><text x="270.3" y="140.7" text-anchor="middle">30</text><text x="320.3" y="140.7" text-anchor="middle">40</text><text x="370.3" y="140.7" text-anchor="middle">50</text><text x="420.3" y="140.7" text-anchor="middle">60</text><text x="470.3" y="140.7" text-anchor="middle">70</text><text x="520.3" y="140.7" text-anchor="middle">80</text><text x="570.3" y="140.7" text-anchor="middle">90</text><text x="620.3" y="140.7" text-anchor="middle">100</text><text x="670.3" y="140.7" text-anchor="middle">110</text><text x="720.3" y="140.7" text-anchor="middle">120</text><text x="770.3" y="140.7" text-anchor="middle">130</text><text x="820.3" y="140.7" text-anchor="middle">140</text><text x="870.3" y="140.7" text-anchor="middle">150</text><text x="920.3" y="140.7" text-anchor="middle">160</text><text x="970.3" y="140.7" text-anchor="middle">170</text><text x="1020.3" y="140.7" text-anchor="middle">180</text><text x="1070.3" y="140.7" text-anchor="middle">190</text><text x="1120.3" y="140.7" text-anchor="middle">200</text></g>
<path d="M88 707.5H95M88 657.5H95M88 607.5H95M88 557.5H95M88 507.5H95M88 457.5H95M88 407.5H95M88 357.5H95M88 307.5H95M88 257.5H95M88 207.5H95M88 157.5H95" stroke="#6a6a6a" stroke-width="1"/>
<g font-family="Liberation Sans" font-size="8.6" fill="#000" stroke="#000" stroke-width=".18"><text transform="translate(80.8 707.4) rotate(-90)" text-anchor="middle">0</text><text transform="translate(80.8 657.4) rotate(-90)" text-anchor="middle">10</text><text transform="translate(80.8 607.4) rotate(-90)" text-anchor="middle">20</text><text transform="translate(80.8 557.4) rotate(-90)" text-anchor="middle">30</text><text transform="translate(80.8 507.4) rotate(-90)" text-anchor="middle">40</text><text transform="translate(80.8 457.4) rotate(-90)" text-anchor="middle">50</text><text transform="translate(80.8 407.4) rotate(-90)" text-anchor="middle">60</text><text transform="translate(80.8 357.4) rotate(-90)" text-anchor="middle">70</text><text transform="translate(80.8 307.4) rotate(-90)" text-anchor="middle">80</text><text transform="translate(80.8 257.4) rotate(-90)" text-anchor="middle">90</text><text transform="translate(80.8 207.4) rotate(-90)" text-anchor="middle">100</text></g>
<g font-family="Liberation Sans" font-size="8.6" fill="#000" stroke="#000" stroke-width=".18"><clipPath id="vrc"><rect x="72" y="155" width="23" height="600"/></clipPath><g clip-path="url(#vrc)"><text transform="translate(80.8 157.4) rotate(-90)" text-anchor="middle">110</text></g></g>
<path d="M614.4 145.2H626.2L620.3 150.6Z" fill="#000"/><path d="M620.5 150V155" stroke="#777" stroke-width="1"/>
<path d="M85.4 351.2V362.8L91.8 357Z" fill="#000"/>
<path d="M99.5 707H140.5M120 686.5V727.5" stroke="#600909" stroke-width="2"/>
<path d="M95 357H1139" stroke="#4c3602" stroke-width="2" stroke-dasharray="4.3 1.7"/>
<path d="M620 155V732" stroke="#1c1404" stroke-width="2"/><path d="M620 155V732" stroke="#584006" stroke-width="2" stroke-dasharray="4.3 1.7"/>
<circle cx="620" cy="357" r="39.6" fill="url(#ring)"/>
<path d="M870 557H420V292.5L601.8 187.7" fill="none" stroke="#fff" stroke-width="1.35"/>
<path d="M420 444.5H870.5" stroke="#fff" stroke-width="1.35"/>
<path d="M601.8 187.7L620 357" stroke="#fff" stroke-width="1.3"/>
<circle cx="601.8" cy="187.7" r="4.8" fill="none" stroke="#c00000" stroke-width="1"/><path d="M597 187.7H606.6M601.8 182.9V192.5" stroke="#a00000" stroke-width=".9"/>
<path d="M606 357H634M620 343V371" stroke="#c2c2c2" stroke-width="3.9" stroke-linecap="round"/>
<circle cx="620" cy="357" r="5" fill="none" stroke="#e0a010" stroke-width=".9" stroke-dasharray="2 1.2"/><circle cx="620" cy="357" r="1.5" fill="#c08a10"/>
<text x="627.5" y="375.8" font-family="Liberation Sans" font-size="14.2" fill="#f2b824">Grille</text>
<rect x="580" y="405.7" width="72.4" height="72.4" rx="6.5" fill="url(#keyg)" stroke="#727272" stroke-width="2.5"/>
<path d="M602.8 443.7H619" stroke="#000" stroke-width="3.4"/><path d="M618 437V450.4L625.3 443.7Z" fill="#000"/><rect x="627" y="436.8" width="2.8" height="14.1" fill="#000"/>
<rect x="1143" y="338.2" width="8" height="279.4" rx="4" fill="#808080"/>
<rect x="158" y="736.2" width="819" height="7.6" rx="3.8" fill="#808080"/>
<text x="1153.3" y="745.4" text-anchor="end" font-family="Liberation Sans" font-size="13" fill="#000">10 &lt; 100</text>
<linearGradient id="qg" x1="0" y1="0" x2="1" y2="1"><stop offset="0" stop-color="#a2aed6"/><stop offset=".45" stop-color="#3a4f9a"/><stop offset="1" stop-color="#1f3582"/></linearGradient><circle cx="102" cy="118.5" r="5.2" fill="#f2f2f4" stroke="url(#qg)" stroke-width="2.6"/><path d="M99 118.4H104.6M101.8 115.6V121.4" stroke="#c8a0a8" stroke-width=".7"/><path d="M102.6 119.2L106.6 123.4" stroke="#f2a01a" stroke-width="2.2" stroke-linecap="round"/><path d="M106.9 123.7L107.8 124.6" stroke="#e06068" stroke-width="2" stroke-linecap="round"/>
<text x="632" y="123.8" text-anchor="middle" font-family="Liberation Sans" font-size="11.3" letter-spacing=".2" fill="#111">* Sans titre 1</text>
</svg>
<div id="cmdarea">
<div class="abs" style="left:0;top:-1.5px;width:1082px;height:3px;background:linear-gradient(#e4e4e4,#b4b4b4 60%,#c4c4c4)"></div>
<div class="abs" style="left:1px;top:1.5px;width:1081px;height:21px;background:#fff;border-bottom:1px solid #a8a8a8"></div>
<div class="abs" style="left:1066px;top:1.5px;width:15.5px;height:20px;background:#f7f7f7"></div>
<div class="abs" style="left:1070px;top:2px;width:8px;height:17px;border-radius:4px;background:#808080"></div>
<div class="abs" style="left:5.3px;top:2.2px;font-size:13.2px;line-height:16px;color:#0808d8;-webkit-text-stroke:.15px #0808d8;white-space:nowrap"><i>Commande:</i> li</div>
<div class="abs" style="left:89px;top:27.7px;width:966.3px;height:18.4px;background:#fff"></div>
<div class="abs" style="left:1.3px;top:29.5px;font-size:13.2px;line-height:16px;color:#111;-webkit-text-stroke:.18px #111;white-space:nowrap">Point suivant :</div>
<div class="abs" style="left:1055.4px;top:23.9px;width:25.4px;height:25.4px;border:1px solid #a4a4a4;background:linear-gradient(#e6e6e6,#f5f5f5)"></div>
<svg class="abs" style="left:1060px;top:30.4px" width="16" height="12" viewBox="0 0 16 12"><rect x="1" y="1.3" width="14" height="9.4" fill="#ececec" stroke="#666" stroke-width=".8"/><rect x=".8" y="1" width="14.4" height="2.7" fill="#000"/><rect x="10.6" y="1.8" width="1" height="1" fill="#888"/></svg>
</div>
<svg class="abs" style="left:1155px;top:108px" width="345" height="690" viewBox="1155 108 345 690">
<defs>
<linearGradient id="ttl" x1="0" y1="0" x2="0" y2="1"><stop offset="0" stop-color="#ececec"/><stop offset="1" stop-color="#d9d9d9"/></linearGradient>
<linearGradient id="lbt" x1="0" y1="0" x2="0" y2="1"><stop offset="0" stop-color="#e6e6e6"/><stop offset=".5" stop-color="#ececec"/><stop offset="1" stop-color="#f7f7f7"/></linearGradient>
<linearGradient id="rtb" x1="0" y1="0" x2="1" y2="0"><stop offset="0" stop-color="#cfcfcf"/><stop offset=".012" stop-color="#cfcfcf"/><stop offset=".03" stop-color="#f2f2f2"/><stop offset=".09" stop-color="#ebebeb"/><stop offset=".955" stop-color="#cacaca"/><stop offset=".962" stop-color="#bcbcbc"/><stop offset="1" stop-color="#bababa"/></linearGradient>
</defs>
<rect x="1155.5" y="108" width="299" height="690" fill="#fff"/>
<rect x="1155.5" y="108" width="299" height="22" fill="url(#ttl)"/>
<circle cx="1164" cy="118" r="6.9" fill="#6e6e6e"/><path d="M1161.2 115.2L1166.8 120.8M1166.8 115.2L1161.2 120.8" stroke="#f0f0f0" stroke-width="1.9" stroke-linecap="round"/>
<circle cx="1182" cy="118" r="6.9" fill="#6e6e6e"/><rect x="1180.6" y="114.6" width="5.2" height="4.2" rx=".6" fill="none" stroke="#f0f0f0" stroke-width="1"/><rect x="1178.2" y="117" width="5.2" height="4.2" rx=".6" fill="#6e6e6e" stroke="#f0f0f0" stroke-width="1"/>
<text x="1322.4" y="122.8" text-anchor="middle" font-family="Liberation Sans" font-size="11.8" fill="#303030">Liste des calques</text>
<rect x="1155.5" y="130" width="299" height="26" fill="#acacac"/>
<rect x="1156.0" y="131.2" width="58.6" height="23.8" fill="url(#lbt)"/>
<rect x="1216.0" y="131.2" width="58.6" height="23.8" fill="url(#lbt)"/>
<rect x="1275.8" y="131.2" width="58.6" height="23.8" fill="url(#lbt)"/>
<rect x="1335.6" y="131.2" width="58.6" height="23.8" fill="url(#lbt)"/>
<rect x="1395.4" y="131.2" width="58.6" height="23.8" fill="url(#lbt)"/>
<g transform="translate(1185.1 142.6)" opacity="1"><path d="M-7.7 .7 C-6.2 -3.4 -2.8 -5.6 .3 -5.6 C3.8 -5.6 6.6 -3.2 7.6 .4 C6.2 3.8 3.2 5.6 0 5.6 C-3.2 5.6 -6.2 3.8 -7.7 .7Z" fill="#000"/><path d="M-5.1 -1.5 C-4.8 2.2 -2.2 3.9 0 3.9 C2.4 3.9 4.6 1.8 4.7 -1.5 L3.3 -1.9 C3 .6 1.7 2.2 0 2.2 C-1.9 2.2 -3.4 .7 -3.7 -1.9 Z" fill="#fff"/><circle cx="-1.3" cy="-1.3" r=".75" fill="#9a9a9a"/></g>
<g transform="translate(1245.1 142.6)" opacity="0.75"><path d="M-7.7 .7 C-6.2 -3.4 -2.8 -5.6 .3 -5.6 C3.8 -5.6 6.6 -3.2 7.6 .4 C6.2 3.8 3.2 5.6 0 5.6 C-3.2 5.6 -6.2 3.8 -7.7 .7Z" fill="#8a8a8a"/><path d="M-5.1 -1.5 C-4.8 2.2 -2.2 3.9 0 3.9 C2.4 3.9 4.6 1.8 4.7 -1.5 L3.3 -1.9 C3 .6 1.7 2.2 0 2.2 C-1.9 2.2 -3.4 .7 -3.7 -1.9 Z" fill="#fff"/><circle cx="-1.3" cy="-1.3" r=".75" fill="#9a9a9a"/></g>
<path d="M1299 143H1311M1305 137V149" stroke="#8a0000" stroke-width="3.4"/><path d="M1299.5 143H1310.5M1305 137.5V148.5" stroke="#ff0a0a" stroke-width="2.4"/>
<path d="M1359 143H1371" stroke="#8a0000" stroke-width="3.4"/><path d="M1359.5 143H1370.5" stroke="#ff0a0a" stroke-width="2.4"/>
<path d="M1419.25 146.29 L1429.09 136.74 L1431.18 138.89 L1421.34 148.45 Z" fill="#dca040" stroke="#a87420" stroke-width=".5"/><path d="M1428.95 136.88 L1430.95 134.92 L1433.05 137.08 L1431.04 139.03 Z" fill="#e23a3a"/><path d="M1418.00 149.60 L1419.25 146.29 L1421.34 148.45 Z" fill="#c89048"/><path d="M1418.00 149.60 L1418.51 148.41 L1419.21 149.12Z" fill="#4a3a1a"/>
<rect x="1161.2" y="163.4" width="15.6" height="8.2" fill="#fff" stroke="#000" stroke-width="1.1"/>
<text x="1183" y="171.8" font-family="Liberation Sans" font-size="12.6" fill="#111">0</text>
<path d="M1395.94 169.99 L1404.39 161.74 L1406.49 163.89 L1398.04 172.14 Z" fill="#dca040" stroke="#a87420" stroke-width=".5"/><path d="M1404.25 161.88 L1406.25 159.93 L1408.35 162.07 L1406.34 164.03 Z" fill="#e23a3a"/><path d="M1394.70 173.30 L1395.94 169.99 L1398.04 172.14 Z" fill="#c89048"/><path d="M1394.70 173.30 L1395.21 172.10 L1395.91 172.82Z" fill="#4a3a1a"/>
<g transform="translate(1423.1 166.2)" opacity="1"><path d="M-7.7 .7 C-6.2 -3.4 -2.8 -5.6 .3 -5.6 C3.8 -5.6 6.6 -3.2 7.6 .4 C6.2 3.8 3.2 5.6 0 5.6 C-3.2 5.6 -6.2 3.8 -7.7 .7Z" fill="#000"/><path d="M-5.1 -1.5 C-4.8 2.2 -2.2 3.9 0 3.9 C2.4 3.9 4.6 1.8 4.7 -1.5 L3.3 -1.9 C3 .6 1.7 2.2 0 2.2 C-1.9 2.2 -3.4 .7 -3.7 -1.9 Z" fill="#fff"/><circle cx="-1.3" cy="-1.3" r=".75" fill="#9a9a9a"/></g>
<rect x="1440" y="166.6" width="10" height="7" rx=".8" fill="#b6b6b6"/><path d="M1442 167V164.6A3 3.2 0 0 1 1448 164.6V167" fill="none" stroke="#b6b6b6" stroke-width="1.4"/>
<rect x="1454.5" y="108" width="45.5" height="690" fill="url(#rtb)"/>
<g fill="#a4a4a4"><rect x="1462" y="116" width="2" height="2"/><rect x="1468" y="116" width="2" height="2"/><rect x="1474" y="116" width="2" height="2"/><rect x="1480" y="116" width="2" height="2"/><rect x="1486" y="116" width="2" height="2"/></g>
<path d="M1458 261.5H1499M1458 409.5H1499" stroke="#4a4a4a" stroke-width="1" stroke-dasharray="1 2.1"/>
<rect x="1456.3" y="120.3" width="50" height="42.2" rx="5" fill="#b5b5b5"/>
<rect x="1456.3" y="417.3" width="50" height="42" rx="5" fill="#b5b5b5"/>
<rect x="1463.4" y="127.4" width="27.2" height="27.2" fill="#fff" stroke="#5a5a5a" stroke-width=".8"/><rect x="1463" y="127" width="28" height="4.6" fill="#000"/><rect x="1464.4" y="127.8" width="3.2" height="3.2" fill="#fff"/>
<rect x="1463.4" y="174.4" width="27.2" height="27.2" fill="#fff" stroke="#5a5a5a" stroke-width=".8"/><rect x="1463" y="174" width="28" height="4.6" fill="#000"/><rect x="1464.4" y="174.8" width="3.2" height="3.2" fill="#fff"/>
<rect x="1463.4" y="220.70000000000002" width="27.2" height="27.2" fill="#fff" stroke="#5a5a5a" stroke-width=".8"/><rect x="1463" y="220.3" width="28" height="4.6" fill="#000"/><rect x="1464.4" y="221.10000000000002" width="3.2" height="3.2" fill="#fff"/>
<rect x="1463.4" y="276.4" width="27.2" height="27.2" fill="#fff" stroke="#5a5a5a" stroke-width=".8"/><rect x="1463" y="276" width="28" height="4.6" fill="#000"/><rect x="1464.4" y="276.8" width="3.2" height="3.2" fill="#fff"/>
<rect x="1463.4" y="322.7" width="27.2" height="27.2" fill="#fff" stroke="#5a5a5a" stroke-width=".8"/><rect x="1463" y="322.3" width="28" height="4.6" fill="#000"/><rect x="1464.4" y="323.1" width="3.2" height="3.2" fill="#fff"/>
<rect x="1463.4" y="368.7" width="27.2" height="27.2" fill="#fff" stroke="#5a5a5a" stroke-width=".8"/><rect x="1463" y="368.3" width="28" height="4.6" fill="#000"/><rect x="1464.4" y="369.1" width="3.2" height="3.2" fill="#fff"/>
<rect x="1463.4" y="424.79999999999995" width="27.2" height="27.2" fill="#fff" stroke="#5a5a5a" stroke-width=".8"/><rect x="1463" y="424.4" width="28" height="4.6" fill="#000"/><rect x="1464.4" y="425.2" width="3.2" height="3.2" fill="#fff"/>
<rect x="1463.4" y="471.59999999999997" width="27.2" height="27.2" fill="#fff" stroke="#5a5a5a" stroke-width=".8"/><rect x="1463" y="471.2" width="28" height="4.6" fill="#000"/><rect x="1464.4" y="472.0" width="3.2" height="3.2" fill="#fff"/>
<g stroke-width=".7"><path d="M1472.2 139.8L1481.6 135.8V146.2L1472.2 150.2Z" fill="#9a9a9a" stroke="#555"/><path d="M1474 140.4L1483.4 136.4V146.8L1474 150.8Z" fill="#b4b4b4" stroke="#555"/><path d="M1476 141L1485.4 137V147.4L1476 151.4Z" fill="#fff" stroke="#555"/><path d="M1478.4 148.4L1483.6 140.6V146.2Z" fill="#f8d0d0" stroke="#e03030" stroke-width=".8"/></g>
<rect x="1470.5" y="184.4" width="10.5" height="7.1" fill="#f6eec4" stroke="#555" stroke-width=".8"/><circle cx="1478.8" cy="191" r="4.2" fill="#f6eec4" stroke="#555" stroke-width=".8"/>
<rect x="1468.4" y="230.6" width="17.2" height="11" rx="2.2" fill="#f5f5f5" stroke="#c2d2ea" stroke-width="1"/>
<rect x="1466.4" y="284.5" width="4.2" height="3.2" rx=".6" fill="#000"/><rect x="1473.6" y="284.6" width="14" height="3" fill="#fff" stroke="#444" stroke-width=".7"/>
<rect x="1466.4" y="290.4" width="4.2" height="3.2" rx=".6" fill="#000"/><rect x="1473.6" y="290.5" width="14" height="3" fill="#fff" stroke="#444" stroke-width=".7"/>
<rect x="1466.4" y="296.4" width="4.2" height="3.2" rx=".6" fill="#000"/><rect x="1473.6" y="296.5" width="14" height="3" fill="#fff" stroke="#444" stroke-width=".7"/>
<path d="M1470 332.2 C1472 330.6 1482.2 330.6 1484.2 332.2 C1483.6 334.6 1480 337.6 1478.6 338.8 V345 L1476 343.6 V338.8 C1474.4 337.6 1470.6 334.6 1470 332.2Z" fill="#9a9a9a" stroke="#6e6e6e" stroke-width=".6"/><ellipse cx="1477.1" cy="332.2" rx="6.6" ry="1.2" fill="#787878"/>
<path d="M1469.4 377.6V391L1474 387.8V380.8Z" fill="#fff" stroke="#444" stroke-width=".8"/><rect x="1474" y="380.2" width="10.6" height="8.4" rx="1" fill="#b0b0b0" stroke="#7a7a7a" stroke-width=".6"/><path d="M1476 380.4V388.4M1478 380.4V388.4M1480 380.4V388.4M1482 380.4V388.4" stroke="#8a8a8a" stroke-width=".6"/><path d="M1467 384.4H1487" stroke="#f09090" stroke-width=".8" stroke-dasharray="3 1 1 1"/>
<g stroke="#8a8a8a" stroke-width="1.1"><path d="M1465.6 432.4H1481" stroke-dasharray="4.5 .8 3 .8 4 2"/><path d="M1465.6 435.8H1479.6" stroke-dasharray="5 .8 2.4 1 3 2"/><path d="M1465.6 439.2H1482.6" stroke-dasharray="5.4 .8 4 .8 3 2"/><path d="M1465.6 442.6H1483" stroke-dasharray="5 .8 5 .8 4 2"/></g>
<path d="M1463.4 447.2H1490.6" stroke="#3a3a3a" stroke-width=".8"/><path d="M1465.6 449.6H1467.6M1472.6 449.6H1488.6" stroke="#6a6a6a" stroke-width="1"/>
<rect x="1470.2" y="480.6" width="13.2" height="13.2" rx="1" fill="#c6821a" stroke="#8f5a0e" stroke-width=".5"/><rect x="1471.8" y="482" width="10" height="10.6" fill="#f1f1ef"/><path d="M1473.2 484.6H1480.4M1473.2 486.4H1480.4M1473.2 488.2H1479M1473.2 490H1478" stroke="#c8c8c4" stroke-width=".7"/><rect x="1474" y="479.6" width="5.6" height="2.8" rx=".8" fill="#8f8f88"/><path d="M1481.8 489.6V492.6H1478.8Z" fill="#8c8c86"/>
</svg>
<div id="status">
<div class="abs" style="left:0;top:0;width:1500px;height:1px;background:#d2d2d2"></div>
<div class="abs st" style="left:2px;top:8px">100,70</div>
<div class="abs st" style="left:2px;top:29.2px">@3.6286,-33.799</div>
<div class="abs" style="left:253px;top:4.3px;width:1px;height:39.4px;background:#8a8a8a"></div>
<div class="abs" style="left:254px;top:4.3px;width:1px;height:39.4px;background:#efefef"></div>
<div class="abs st" style="left:256.2px;top:8px">122.0656&lt;35°</div>
<div class="abs st" style="left:256.2px;top:29.2px">@33.9933&lt;276°</div>
<div class="abs dot" style="left:506.3px;top:21.3px"></div>
<div class="abs st" style="left:640.2px;top:17.8px;letter-spacing:.25px">Point suivant</div>
<svg class="abs" style="left:715px;top:6px" width="22" height="34" viewBox="715 804 22 34"><rect x="717.4" y="806" width="17" height="29.4" rx="8.5" fill="#fff" stroke="#505050" stroke-width=".9"/><path d="M717.4 819.8 Q725.9 817.4 734.4 819.8" fill="none" stroke="#505050" stroke-width=".9"/><path d="M725.9 806V808M725.9 816V818.6" stroke="#505050" stroke-width=".9"/><rect x="724.6" y="808" width="2.6" height="8" rx="1.3" fill="#fff" stroke="#505050" stroke-width=".9"/></svg>
<div class="abs st" style="left:754.6px;top:17.8px;letter-spacing:.22px">Terminer</div>
<div class="abs dot" style="left:940.6px;top:21.3px"></div>
<div class="abs st" id="aucune" style="left:949.3px;top:17.8px;letter-spacing:.29px">Aucune des entités sélectionnées.</div>
<div class="abs dot" style="left:1269.3px;top:21.3px"></div>
</div>
</div>
</body>
</html>
